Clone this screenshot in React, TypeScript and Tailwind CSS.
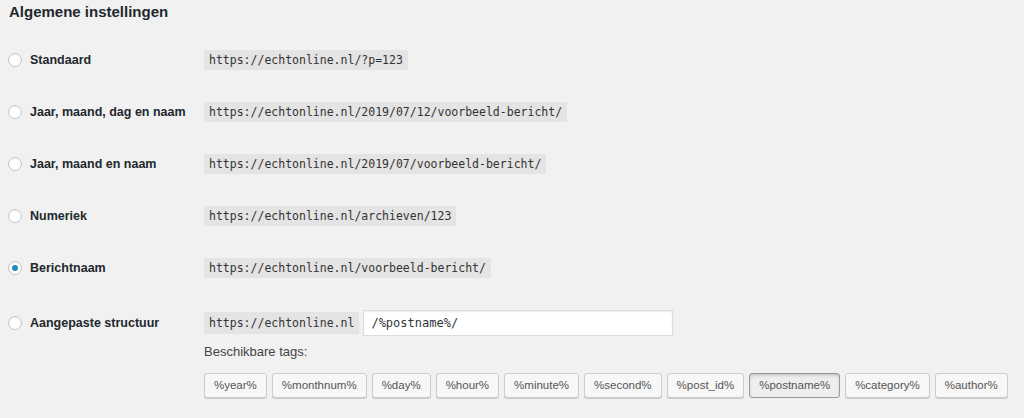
import React from "react";

const rows = [
  { label: "Standaard", url: "https://echtonline.nl/?p=123" },
  { label: "Jaar, maand, dag en naam", url: "https://echtonline.nl/2019/07/12/voorbeeld-bericht/" },
  { label: "Jaar, maand en naam", url: "https://echtonline.nl/2019/07/voorbeeld-bericht/" },
  { label: "Numeriek", url: "https://echtonline.nl/archieven/123" },
  { label: "Berichtnaam", url: "https://echtonline.nl/voorbeeld-bericht/", checked: true },
];

const tags = [
  "%year%",
  "%monthnum%",
  "%day%",
  "%hour%",
  "%minute%",
  "%second%",
  "%post_id%",
  "%postname%",
  "%category%",
  "%author%",
];

function Radio({ checked }: { checked?: boolean }) {
  return (
    <span className="w-[14px] h-[14px] rounded-full border border-[#c3c6c9] bg-white shadow-[inset_0_1px_2px_rgba(0,0,0,0.08)] flex items-center justify-center shrink-0">
      {checked && <span className="w-[6px] h-[6px] rounded-full bg-[#1e8cbe]" />}
    </span>
  );
}

const mono = { fontFamily: '"DejaVu Sans Mono", "Liberation Mono", monospace' };

export default function App() {
  return (
    <div
      className="w-[1024px] h-[418px] bg-[#f1f1f1] text-[#23282d] overflow-hidden"
      style={{ fontFamily: '"Liberation Sans", Arial, sans-serif' }}
    >
      <h2 className="pl-[9px] pt-[2px] h-[34px] text-[15px] leading-[20px] font-semibold text-[#23282d]">
        Algemene instellingen
      </h2>
      {rows.map((r) => (
        <div key={r.label} className="flex items-center h-[52px]">
          <div className="w-[204px] shrink-0 flex items-center gap-[8px] pl-[8px]">
            <Radio checked={r.checked} />
            <span className="text-[12.5px] font-semibold">{r.label}</span>
          </div>
          <code
            className="bg-[#e4e4e4] text-[#333] text-[11.5px] leading-[20px] px-[5px] h-[20px]"
            style={mono}
          >
            {r.url}
          </code>
        </div>
      ))}
      <div className="flex pt-[16px]">
        <div className="w-[204px] shrink-0 flex items-center gap-[8px] pl-[8px] h-[26px] self-start">
          <Radio />
          <span className="text-[12.5px] font-semibold">Aangepaste structuur</span>
        </div>
        <div className="flex flex-col">
          <div className="flex items-center gap-[4px]">
            <code
              className="bg-[#e4e4e4] text-[#333] text-[11.5px] leading-[20px] px-[5px] h-[22px] flex items-center"
              style={mono}
            >
              https://echtonline.nl
            </code>
            <div
              className="w-[310px] h-[26px] bg-white border border-[#ddd] shadow-[inset_0_1px_2px_rgba(0,0,0,0.07)] text-[12px] text-[#32373c] flex items-center px-[7px]"
              style={mono}
            >
              /%postname%/
            </div>
          </div>
          <div className="mt-[8px] text-[13px] text-[#444] leading-[16px]">Beschikbare tags:</div>
          <div className="flex gap-[5px] mt-[13px]">
            {tags.map((t) => (
              <span
                key={t}
                className={
                  t === "%postname%"
                    ? "h-[25px] px-[9px] flex items-center text-[11.5px] text-[#555] rounded-[3px] border border-[#999] bg-[#eee] shadow-[inset_0_2px_5px_-3px_rgba(0,0,0,0.5)]"
                    : "h-[25px] px-[9px] flex items-center text-[11.5px] text-[#555] rounded-[3px] border border-[#ccc] bg-[#f7f7f7] shadow-[0_1px_0_#ccc]"
                }
              >
                {t}
              </span>
            ))}
          </div>
        </div>
      </div>
    </div>
  );
}
